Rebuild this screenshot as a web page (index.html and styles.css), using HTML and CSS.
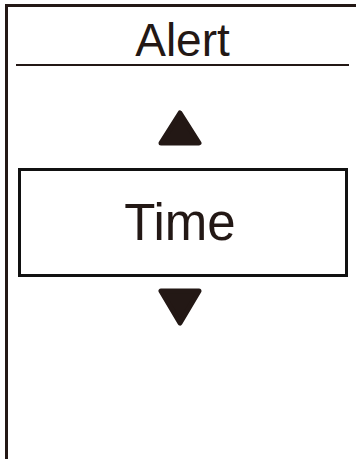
FILE: index.html
```html
<!DOCTYPE html>
<html lang="en">
<head>
  <meta charset="UTF-8">
  <meta name="viewport" content="width=device-width, initial-scale=1.0">
  <title>Alert</title>
  <link rel="stylesheet" href="styles.css">
</head>
<body>

  <div class="screen">
    <div class="title">Alert</div>

    <div class="arrow arrow-up">
      <svg width="44" height="36" viewBox="0 0 44 36">
        <polygon points="22,3 41,33 3,33" />
      </svg>
    </div>

    <div class="option">Time</div>

    <div class="arrow arrow-down">
      <svg width="44" height="38" viewBox="0 0 44 38">
        <polygon points="3,3 41,3 22,35" />
      </svg>
    </div>
  </div>

</body>
</html>
```

FILE: styles.css
```css
* {
  margin: 0;
  padding: 0;
  box-sizing: border-box;
}

body {
  background: #fff;
  font-family: "Liberation Sans", Arial, sans-serif;
  color: #231815;
}

.screen {
  margin: 4px 0 0 5px;
  height: 455px;
  border-top: 3px solid #231815;
  border-left: 3px solid #231815;
  display: flex;
  flex-direction: column;
}

.title {
  margin: 0 7px 0 8px;
  padding: 10px 0 1px;
  font-size: 46px;
  line-height: 46px;
  text-align: center;
  border-bottom: 2px solid #231815;
}

.arrow {
  display: flex;
  justify-content: center;
  padding-right: 4px;
}

.arrow svg polygon {
  fill: #231815;
  stroke: #231815;
  stroke-width: 5;
  stroke-linejoin: round;
}

.arrow-up {
  margin-top: 44px;
}

.arrow-down {
  margin-top: 11px;
}

.option {
  margin: 22px 8px 0 10px;
  padding: 26px 6px 26px 0;
  border: 3px solid #111;
  font-size: 51px;
  line-height: 51px;
  text-align: center;
}
```
